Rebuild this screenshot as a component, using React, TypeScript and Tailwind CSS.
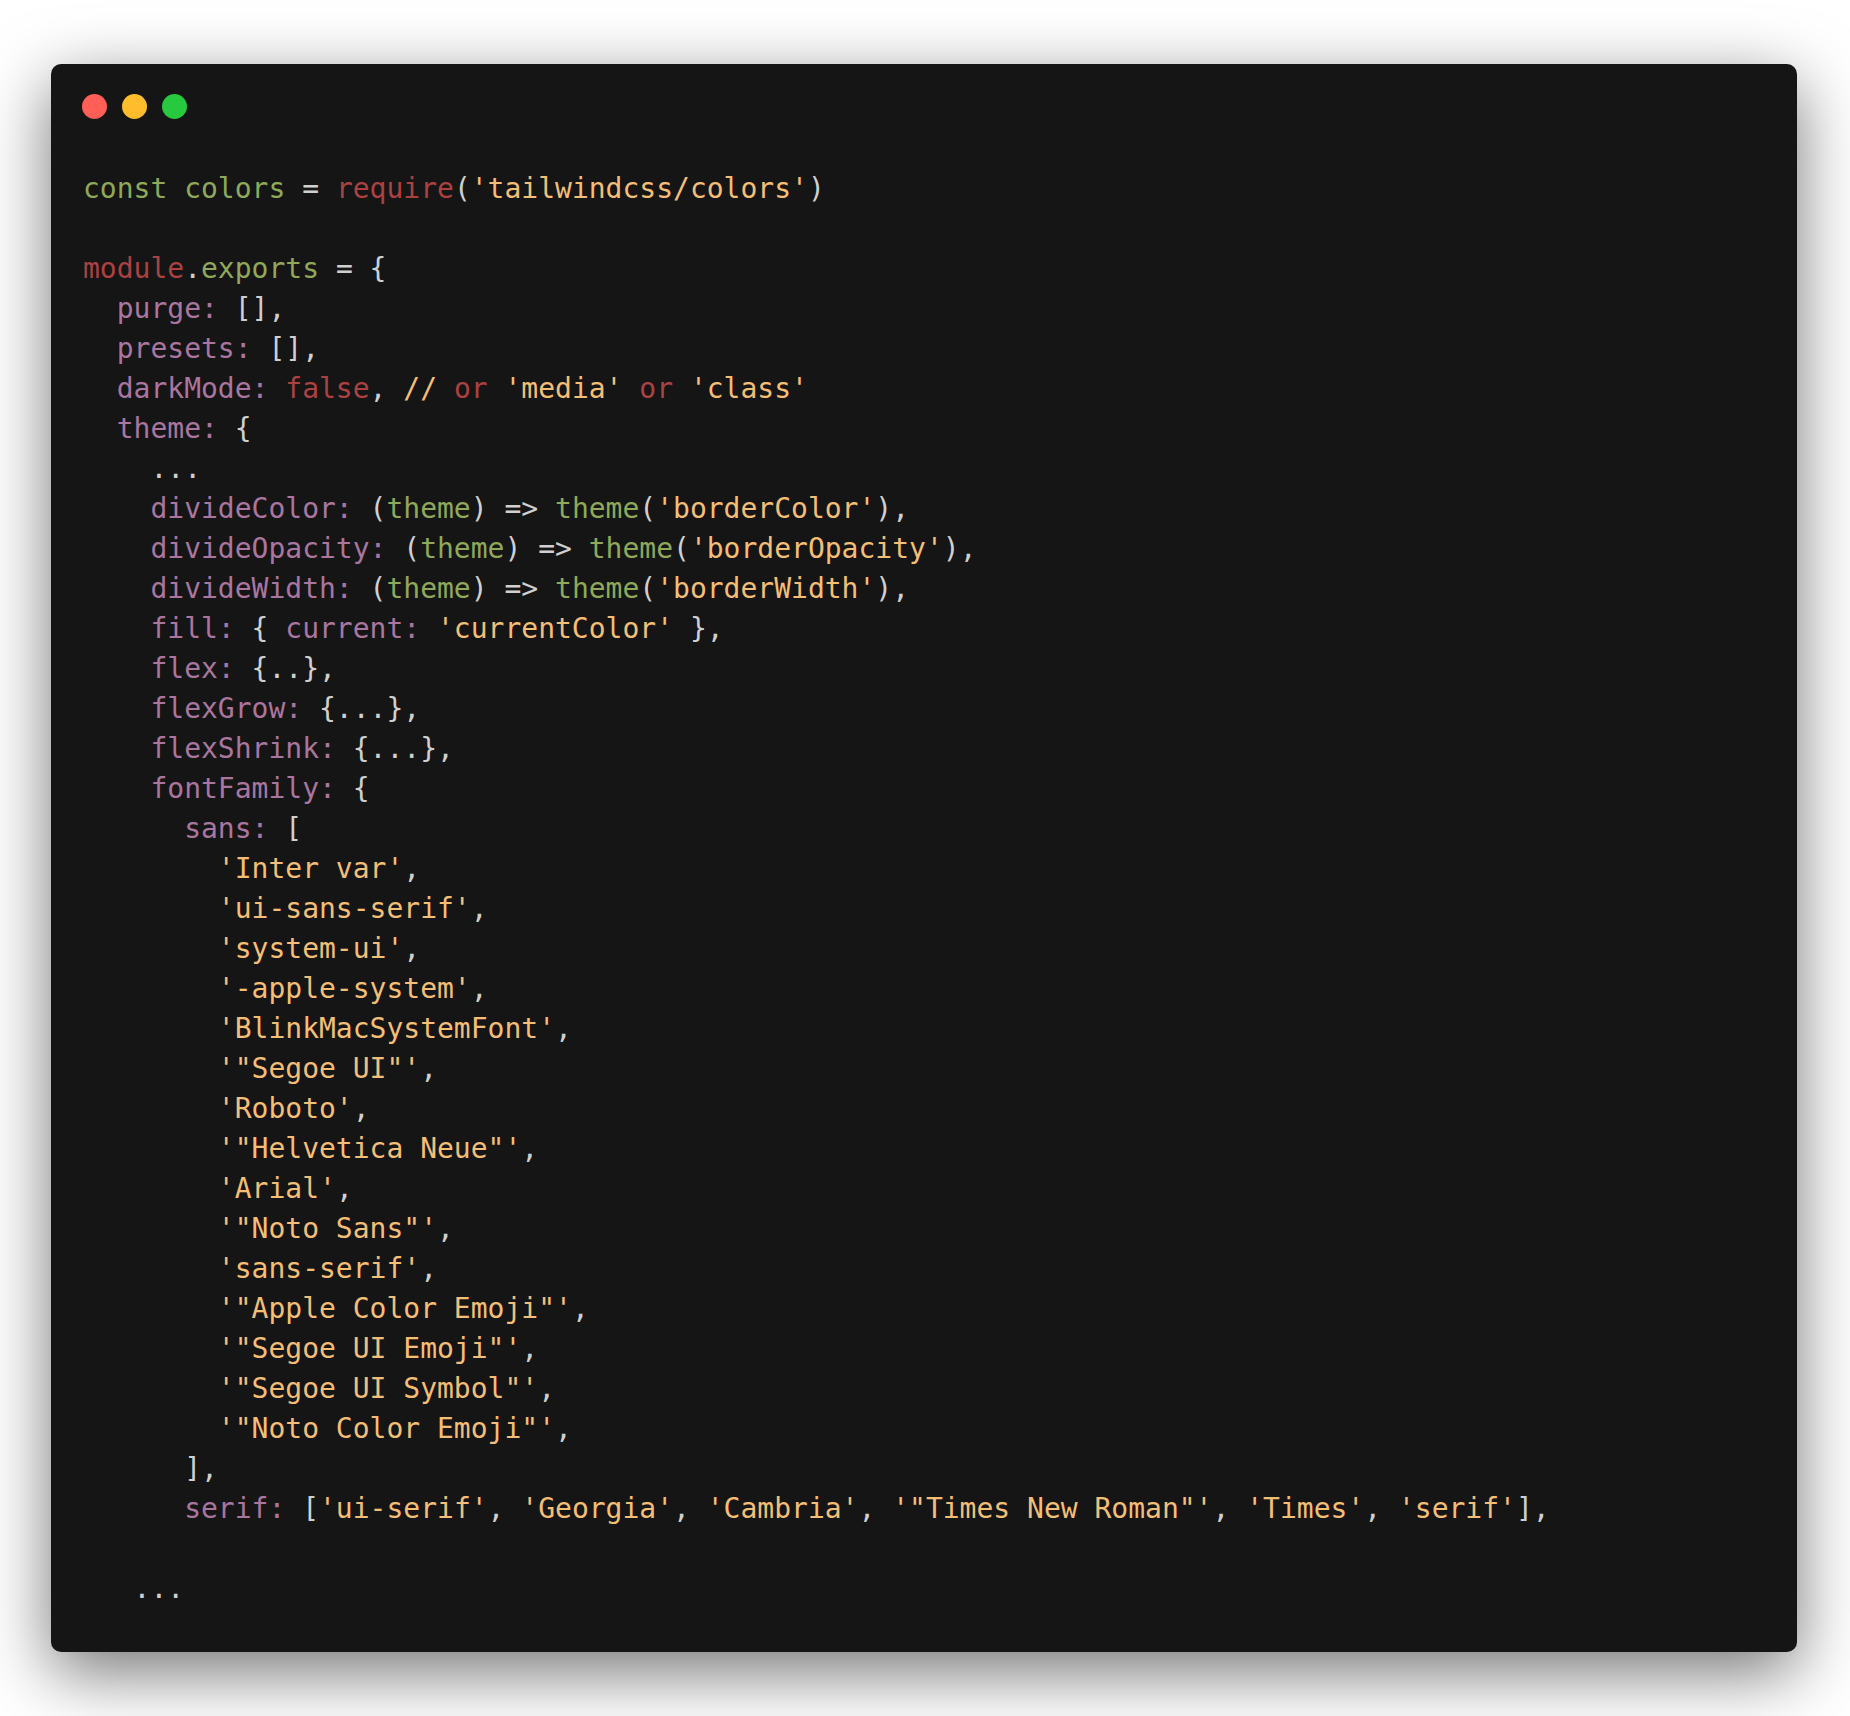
const tone: Record<string, string> = {
  g: "text-[#90a959]",
  r: "text-[#ac4142]",
  p: "text-[#aa759f]",
  y: "text-[#f4bf75]",
  w: "text-[#d0d0d0]",
}

type Tok = [string, string]

const fonts = [
  "'Inter var'",
  "'ui-sans-serif'",
  "'system-ui'",
  "'-apple-system'",
  "'BlinkMacSystemFont'",
  "'\"Segoe UI\"'",
  "'Roboto'",
  "'\"Helvetica Neue\"'",
  "'Arial'",
  "'\"Noto Sans\"'",
  "'sans-serif'",
  "'\"Apple Color Emoji\"'",
  "'\"Segoe UI Emoji\"'",
  "'\"Segoe UI Symbol\"'",
  "'\"Noto Color Emoji\"'",
]

const arrow = (key: string, arg: string): Tok[] => [
  ["p", `    ${key}:`],
  ["w", " ("],
  ["g", "theme"],
  ["w", ") => "],
  ["g", "theme"],
  ["w", "("],
  ["y", `'${arg}'`],
  ["w", "),"],
]

const lines: Tok[][] = [
  [["g", "const colors"], ["w", " = "], ["r", "require"], ["w", "("], ["y", "'tailwindcss/colors'"], ["w", ")"]],
  [],
  [["r", "module"], ["w", "."], ["g", "exports"], ["w", " = {"]],
  [["p", "  purge:"], ["w", " [],"]],
  [["p", "  presets:"], ["w", " [],"]],
  [
    ["p", "  darkMode:"],
    ["r", " false"],
    ["w", ","],
    ["y", " //"],
    ["r", " or"],
    ["y", " 'media'"],
    ["r", " or"],
    ["y", " 'class'"],
  ],
  [["p", "  theme:"], ["w", " {"]],
  [["w", "    ..."]],
  arrow("divideColor", "borderColor"),
  arrow("divideOpacity", "borderOpacity"),
  arrow("divideWidth", "borderWidth"),
  [["p", "    fill:"], ["w", " { "], ["p", "current:"], ["y", " 'currentColor'"], ["w", " },"]],
  [["p", "    flex:"], ["w", " {..},"]],
  [["p", "    flexGrow:"], ["w", " {...},"]],
  [["p", "    flexShrink:"], ["w", " {...},"]],
  [["p", "    fontFamily:"], ["w", " {"]],
  [["p", "      sans:"], ["w", " ["]],
  ...fonts.map((f): Tok[] => [["y", `        ${f}`], ["w", ","]]),
  [["w", "      ],"]],
  [
    ["p", "      serif:"],
    ["w", " ["],
    ["y", "'ui-serif'"],
    ["w", ", "],
    ["y", "'Georgia'"],
    ["w", ", "],
    ["y", "'Cambria'"],
    ["w", ", "],
    ["y", "'\"Times New Roman\"'"],
    ["w", ", "],
    ["y", "'Times'"],
    ["w", ", "],
    ["y", "'serif'"],
    ["w", "],"],
  ],
  [],
  [["w", "   ..."]],
]

export default function App() {
  return (
    <div className="w-full min-h-screen bg-white pl-[51px] pr-[53px] pt-[64px] pb-[64px]">
      <div className="rounded-[10px] bg-[#151515] shadow-[0_20px_68px_rgba(0,0,0,0.55)] pl-[32px] pr-8 pt-[30px] pb-[43px]">
        <div className="flex gap-[15px] -ml-[1px]">
          <span className="w-[25px] h-[25px] rounded-full bg-[#ff5f56]" />
          <span className="w-[25px] h-[25px] rounded-full bg-[#ffbd2e]" />
          <span className="w-[25px] h-[25px] rounded-full bg-[#27c93f]" />
        </div>
        <pre className="mt-[50px] font-['DejaVu_Sans_Mono',monospace] text-[28px] leading-[40px] whitespace-pre">
          {lines.map((line, i) => (
            <div key={i} className="h-[40px]">
              {line.map(([k, t], j) => (
                <span key={j} className={tone[k]}>
                  {t}
                </span>
              ))}
            </div>
          ))}
        </pre>
      </div>
    </div>
  )
}
